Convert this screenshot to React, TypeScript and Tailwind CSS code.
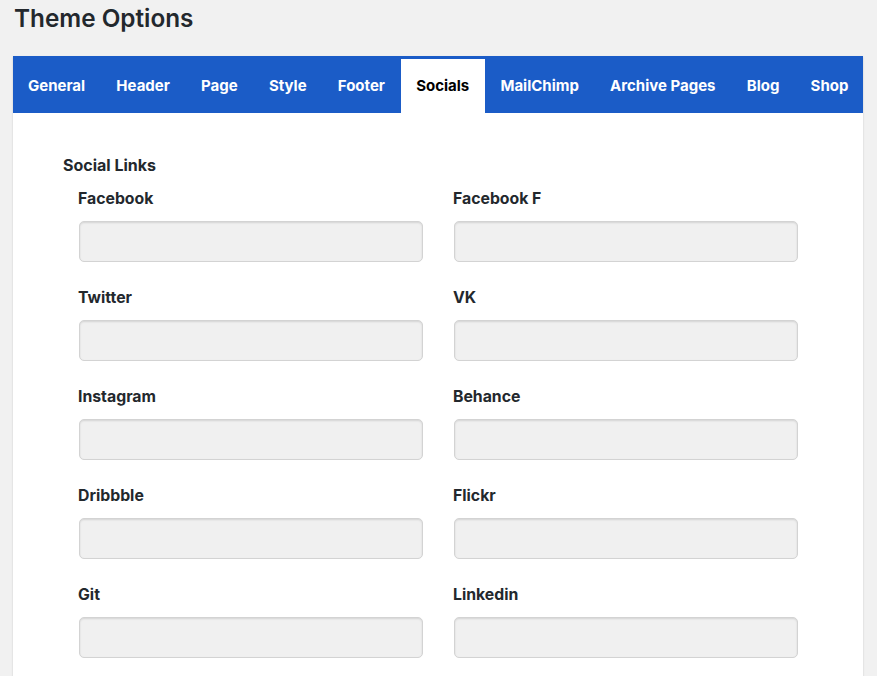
import React from 'react';

const tabs = ['General', 'Header', 'Page', 'Style', 'Footer', 'Socials', 'MailChimp', 'Archive Pages', 'Blog', 'Shop'];

const fields: [string, string][] = [
  ['Facebook', 'Facebook F'],
  ['Twitter', 'VK'],
  ['Instagram', 'Behance'],
  ['Dribbble', 'Flickr'],
  ['Git', 'Linkedin'],
];

function Field({ label }: { label: string }) {
  return (
    <div className="w-[375px]">
      <div className="text-[15.8px] font-bold leading-[20px] text-[#23282d] h-[20px] pt-[1px]">{label}</div>
      <input
        type="text"
        className="mt-[13px] ml-[1px] block h-[41px] w-[344px] rounded-[5px] border border-[#d3d3d3] bg-[#f0f0f0] shadow-[inset_0_1px_2px_rgba(0,0,0,0.12)] outline-none"
      />
    </div>
  );
}

export default function App() {
  return (
    <div className="min-h-screen bg-[#f1f1f1] font-['Inter','Liberation_Sans',sans-serif] overflow-hidden">
      <h1 className="pl-[14px] pt-[4px] text-[24.3px] font-semibold leading-[29px] text-[#23282d]">Theme Options</h1>
      <div className="ml-[13px] mt-[23px] w-[850px] bg-white shadow-[0_1px_2px_rgba(0,0,0,0.15)] h-[640px]">
        <div className="flex h-[57px] items-end overflow-hidden bg-[#1b5cc7]">
          {tabs.map((t) => (
            <div
              key={t}
              className={`flex h-[54px] shrink-0 items-center whitespace-nowrap pl-[15px] pr-[16.2px] text-[15px] font-bold ${
                t === 'Socials' ? 'bg-white text-black' : 'text-white'
              }`}
            >
              {t}
            </div>
          ))}
        </div>
        <div className="pl-[50px] pt-[42px]">
          <div className="text-[16px] font-bold leading-[20px] text-[#23282d]">Social Links</div>
          <div className="ml-[15px] mt-[13px] flex flex-col gap-[25px]">
            {fields.map(([a, b]) => (
              <div key={a} className="flex">
                <Field label={a} />
                <Field label={b} />
              </div>
            ))}
          </div>
        </div>
      </div>
    </div>
  );
}
